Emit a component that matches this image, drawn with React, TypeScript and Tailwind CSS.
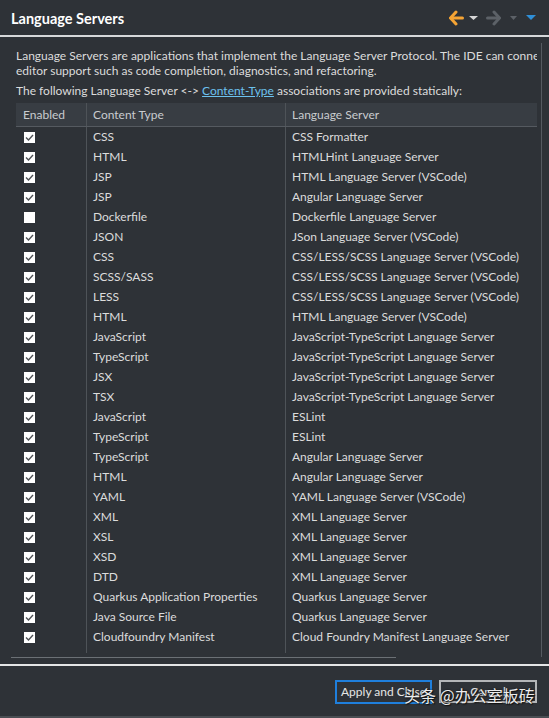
import React from "react";

const rows: [boolean, string, string][] = [
  [true, "CSS", "CSS Formatter"],
  [true, "HTML", "HTMLHint Language Server"],
  [true, "JSP", "HTML Language Server (VSCode)"],
  [true, "JSP", "Angular Language Server"],
  [false, "Dockerfile", "Dockerfile Language Server"],
  [true, "JSON", "JSon Language Server (VSCode)"],
  [true, "CSS", "CSS/LESS/SCSS Language Server (VSCode)"],
  [true, "SCSS/SASS", "CSS/LESS/SCSS Language Server (VSCode)"],
  [true, "LESS", "CSS/LESS/SCSS Language Server (VSCode)"],
  [true, "HTML", "HTML Language Server (VSCode)"],
  [true, "JavaScript", "JavaScript-TypeScript Language Server"],
  [true, "TypeScript", "JavaScript-TypeScript Language Server"],
  [true, "JSX", "JavaScript-TypeScript Language Server"],
  [true, "TSX", "JavaScript-TypeScript Language Server"],
  [true, "JavaScript", "ESLint"],
  [true, "TypeScript", "ESLint"],
  [true, "TypeScript", "Angular Language Server"],
  [true, "HTML", "Angular Language Server"],
  [true, "YAML", "YAML Language Server (VSCode)"],
  [true, "XML", "XML Language Server"],
  [true, "XSL", "XML Language Server"],
  [true, "XSD", "XML Language Server"],
  [true, "DTD", "XML Language Server"],
  [true, "Quarkus Application Properties", "Quarkus Language Server"],
  [true, "Java Source File", "Quarkus Language Server"],
  [true, "Cloudfoundry Manifest", "Cloud Foundry Manifest Language Server"],
];

function Check({ on }: { on: boolean }) {
  return (
    <div className="w-[11px] h-[11px] bg-white flex items-center justify-center">
      {on && (
        <svg width="11" height="11" viewBox="0 0 11 11">
          <polyline points="2,5.5 4.5,8 9,3" fill="none" stroke="#505357" strokeWidth="1.4" />
        </svg>
      )}
    </div>
  );
}

function BackArrow({ color }: { color: string }) {
  return (
    <svg width="16" height="16" viewBox="0 0 16 16">
      <path d="M8 2 L2.5 8 L8 14" fill="none" stroke={color} strokeWidth="3" strokeLinejoin="round" strokeLinecap="round" />
      <path d="M3 8 H14.5" fill="none" stroke={color} strokeWidth="3" strokeLinecap="round" />
    </svg>
  );
}

function Tri({ color, w, h }: { color: string; w: number; h: number }) {
  return (
    <svg width={w} height={h} viewBox={`0 0 ${w} ${h}`}>
      <polygon points={`0,0 ${w},0 ${w / 2},${h}`} fill={color} />
    </svg>
  );
}

export default function App() {
  return (
    <div
      className="relative w-[549px] h-[718px] bg-[#2e3237] flex flex-col overflow-hidden text-[12px] text-[#dcdcdc]"
      style={{ fontFamily: "Lato, 'Noto Sans', sans-serif" }}
    >
      {/* header */}
      <div className="h-[37px] shrink-0 flex items-center justify-between pl-[11px] pr-[13px] border-b-2 border-[#d6d8da]">
        <div className="text-[14.5px] font-bold text-white pt-[2px]">Language Servers</div>
        <div className="flex items-center">
          <BackArrow color="#f5a434" />
          <div className="ml-[5px]"><Tri color="#d6d6d6" w={9} h={4} /></div>
          <div className="ml-[8px] -scale-x-100"><BackArrow color="#5c6167" /></div>
          <div className="ml-[8px]"><Tri color="#5c6167" w={7} h={4} /></div>
          <div className="ml-[9px]"><Tri color="#2f8fd8" w={10} h={5} /></div>
        </div>
      </div>

      {/* body */}
      <div className="flex shrink-0 h-[620px]">
        <div className="w-[537px] pl-[16px] pt-[11px] flex flex-col">
          <div className="leading-[15px] whitespace-nowrap overflow-hidden">
            <div>Language Servers are applications that implement the Language Server Protocol. The IDE can connect to them to provide</div>
            <div>editor support such as code completion, diagnostics, and refactoring.</div>
          </div>
          <div className="leading-[15px] mt-[5px] whitespace-nowrap">
            The following Language Server &lt;-&gt;{" "}
            <span className="text-[#6cc1ee] underline">Content-Type</span> associations are provided statically:
          </div>

          <div className="mt-[5px] h-[550px] flex flex-col">
            <div className="h-[24px] shrink-0 flex bg-[#383d43] border-b border-[#555a60] text-[#c9cccf]">
              <div className="w-[70px] pl-[7px] flex items-center">Enabled</div>
              <div className="w-[199px] pl-[6px] flex items-center border-l border-[#4e5358]">Content Type</div>
              <div className="flex-1 pl-[6px] flex items-center border-l border-[#4e5358]">Language Server</div>
            </div>
            {rows.map(([on, ct, ls], i) => (
              <div key={i} className="h-[20px] shrink-0 flex">
                <div className="w-[70px] pl-[8px] flex items-center">
                  <Check on={on} />
                </div>
                <div className="w-[199px] pl-[6px] flex items-center border-l border-[#4e5358] whitespace-nowrap">{ct}</div>
                <div className="flex-1 pl-[6px] flex items-center border-l border-[#4e5358] whitespace-nowrap">{ls}</div>
              </div>
            ))}
            <div className="flex-1 flex">
              <div className="w-[70px]" />
              <div className="w-[199px] border-l border-[#4e5358]" />
              <div className="flex-1 border-l border-[#4e5358]" />
            </div>
          </div>
        </div>
        <div className="w-px bg-[#555a60] ml-[4px] mt-[6px] mb-0" />
      </div>

      {/* horizontal scroll line */}
      <div className="h-px ml-[11px] w-[385px] bg-[#6b7075] shrink-0" />
      <div className="h-[6px] shrink-0" />
      <div className="h-[2px] bg-[#e4e5e6] shrink-0" />

      {/* footer */}
      <div className="flex-1 flex justify-end items-start pt-[14px] pr-[12px] gap-[7px] border-b-2 border-[#4a4e53]">
        <button className="w-[97px] h-[24px] border-2 border-[#1f7fdc] text-[#e6e6e6] text-[12px] leading-none">
          Apply and Close
        </button>
        <button className="w-[98px] h-[23px] border-2 border-[#b4b6b8] text-[#e6e6e6] text-[12px] leading-none">
          Cancel
        </button>
      </div>

      {/* watermark */}
      <div
        className="absolute left-[404px] top-[687px] text-[16px] leading-none text-[#ececec] whitespace-nowrap"
        style={{
          fontFamily: "'Noto Sans CJK SC', sans-serif",
          textShadow: "0 0 2px #111, 1px 1px 1px #111",
        }}
      >
        头条 @办公室板砖
      </div>
    </div>
  );
}
